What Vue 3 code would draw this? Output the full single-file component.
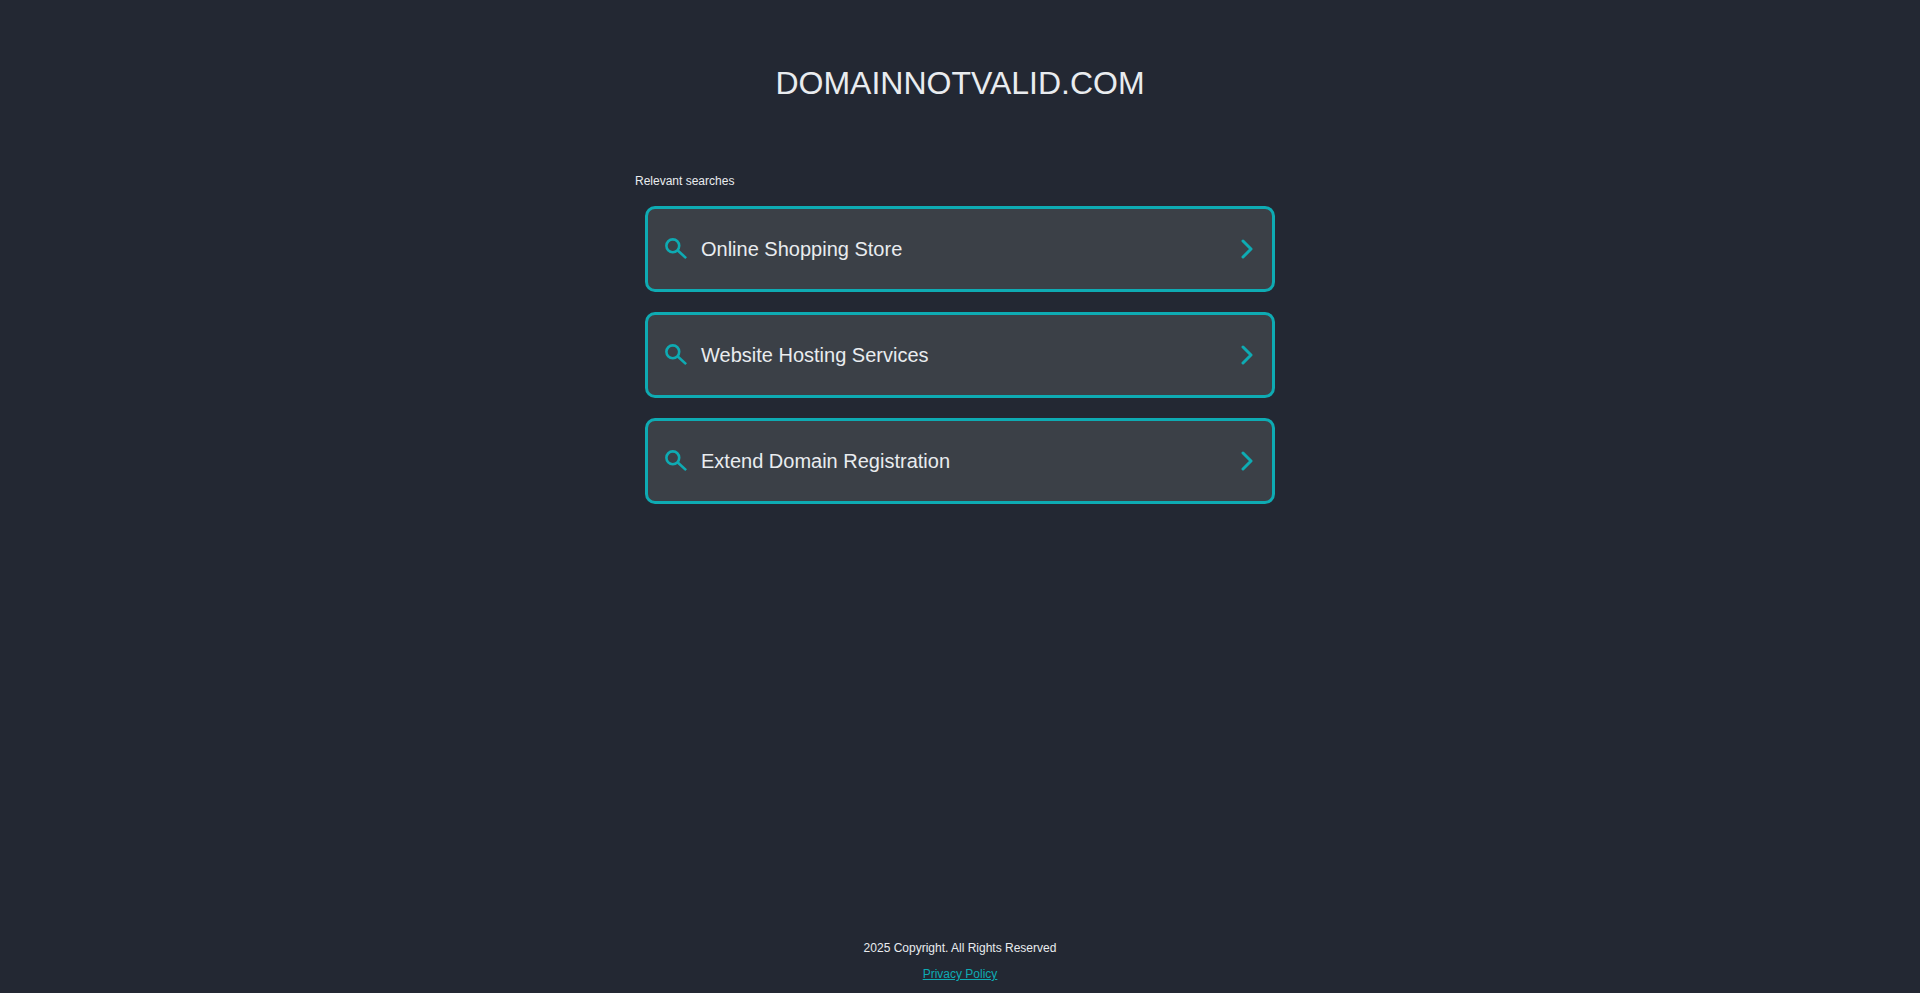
<script setup>
const searches = ['Online Shopping Store', 'Website Hosting Services', 'Extend Domain Registration'];
</script>

<template>
  <div class="page">
    <h1 class="domain">DOMAINNOTVALID.COM</h1>
    <div class="results">
      <p class="label">Relevant searches</p>
      <a v-for="term in searches" :key="term" class="result" href="#">
        <svg class="search-icon" width="22" height="22" viewBox="0 0 22 22" fill="none" stroke="currentColor" stroke-width="2.6">
          <circle cx="7.8" cy="7.8" r="6.4" />
          <path d="M12.5 12.3l8.6 7.8" />
        </svg>
        <span class="term">{{ term }}</span>
        <svg class="chevron" width="12" height="20" viewBox="0 0 12 20" fill="none" stroke="currentColor" stroke-width="3" stroke-linecap="round" stroke-linejoin="round">
          <path d="M2 2l8 8-8 8" />
        </svg>
      </a>
    </div>
    <footer class="footer">
      <p class="copyright">2025 Copyright. All Rights Reserved</p>
      <a class="privacy" href="#">Privacy Policy</a>
    </footer>
  </div>
</template>

<style scoped>
.page {
  display: flex;
  flex-direction: column;
  align-items: center;
  height: 993px;
  box-sizing: border-box;
  background: #232833;
  color: #e9ecef;
  font-family: "Liberation Sans", Arial, sans-serif;
  overflow: hidden;
}

.domain {
  margin: 65px 0 0;
  font-size: 32px;
  line-height: 37px;
  font-weight: 400;
}

.results {
  width: 650px;
  margin-top: 72px;
}

.label {
  margin: 0 0 18px;
  font-size: 12px;
  line-height: 14px;
}

.result {
  display: flex;
  align-items: center;
  width: 630px;
  height: 86px;
  box-sizing: border-box;
  margin: 0 10px 20px;
  padding: 0 19px 0 17px;
  background: #3b4047;
  border: 3px solid #0eabb3;
  border-radius: 10px;
  color: #0eabb3;
  text-decoration: none;
}

.search-icon {
  flex: none;
}

.term {
  flex: 1;
  margin-left: 14px;
  color: #e9ecef;
  font-size: 20px;
}

.chevron {
  flex: none;
}

.footer {
  margin-top: auto;
  padding-bottom: 12px;
  text-align: center;
  font-size: 12px;
  line-height: 14px;
}

.copyright {
  margin: 0 0 12px;
}

.privacy {
  color: #0eabb3;
}
</style>

<style>
html, body {
  margin: 0;
  background: #232833;
}
</style>
